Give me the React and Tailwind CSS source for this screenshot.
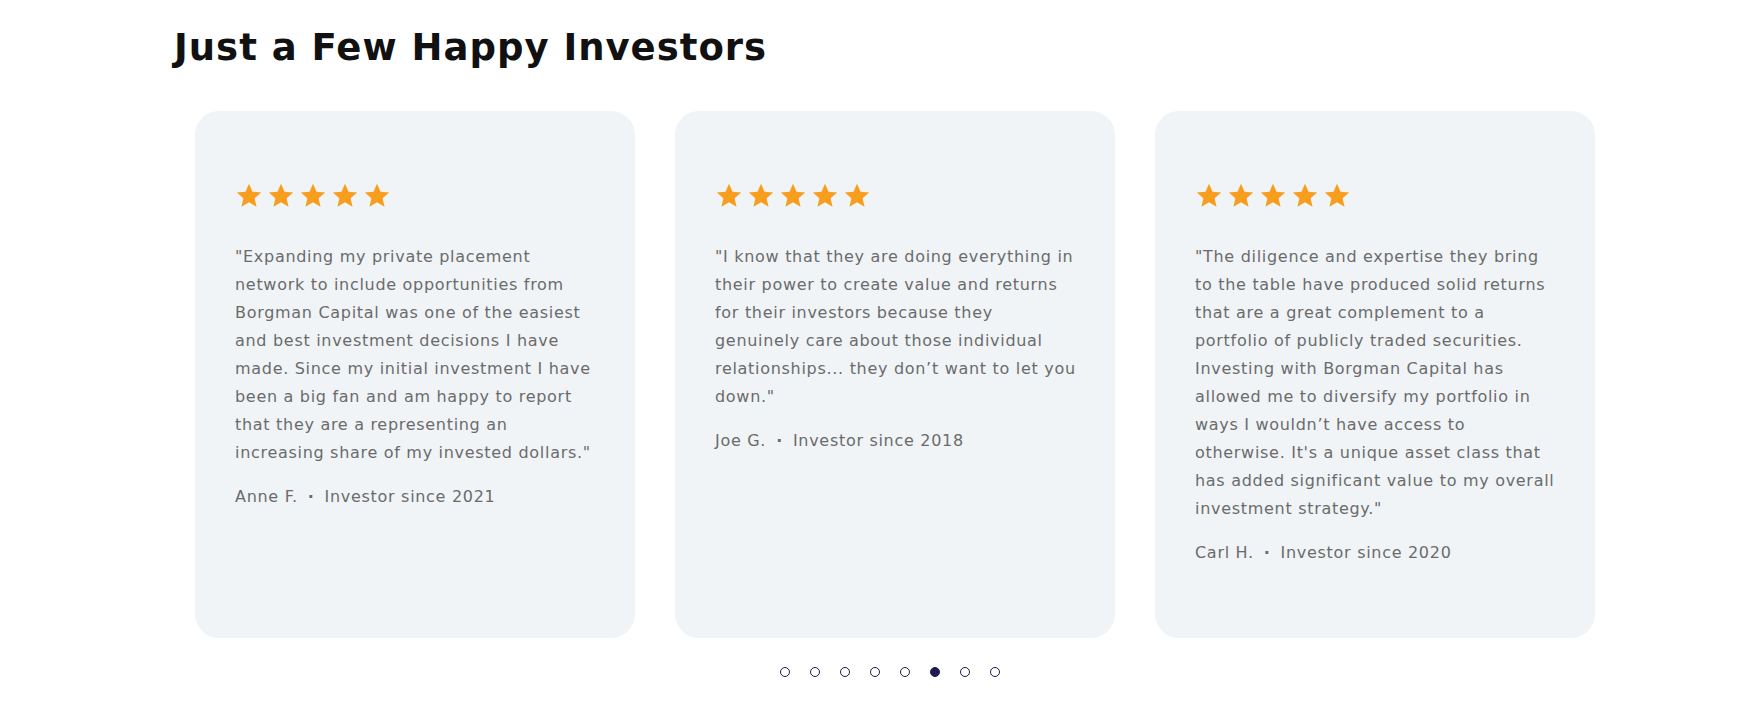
import React from 'react';

const testimonials = [
    {
        lines: [
            '"Expanding my private placement',
            'network to include opportunities from',
            'Borgman Capital was one of the easiest',
            'and best investment decisions I have',
            'made. Since my initial investment I have',
            'been a big fan and am happy to report',
            'that they are a representing an',
            'increasing share of my invested dollars."',
        ],
        name: 'Anne F.',
        since: 'Investor since 2021',
    },
    {
        lines: [
            '"I know that they are doing everything in',
            'their power to create value and returns',
            'for their investors because they',
            'genuinely care about those individual',
            'relationships... they don\u2019t want to let you',
            'down."',
        ],
        name: 'Joe G.',
        since: 'Investor since 2018',
    },
    {
        lines: [
            '"The diligence and expertise they bring',
            'to the table have produced solid returns',
            'that are a great complement to a',
            'portfolio of publicly traded securities.',
            'Investing with Borgman Capital has',
            'allowed me to diversify my portfolio in',
            'ways I wouldn\u2019t have access to',
            'otherwise. It\'s a unique asset class that',
            'has added significant value to my overall',
            'investment strategy."',
        ],
        name: 'Carl H.',
        since: 'Investor since 2020',
    },
];

const Star = () => (
    <svg viewBox="0 0 24 24" className="w-[28px] h-[27px]" fill="#f99d1c">
        <path d="M12 1.5l3.1 7.1 7.7.7-5.8 5.1 1.7 7.6L12 18l-6.7 4 1.7-7.6-5.8-5.1 7.7-.7z" />
    </svg>
);

const Card = ({ t }) => (
    <div className="w-[440px] h-[527px] shrink-0 rounded-[24px] bg-[#f0f4f7] px-[40px] pt-[71px]">
        <div className="flex gap-[4px]">
            {[0, 1, 2, 3, 4].map(i => <Star key={i} />)}
        </div>
        <p className="mt-[34px] text-[16px] leading-[28px] tracking-[0.7px] text-[#6b6b6b]">
            {t.lines.map((l, i) => (
                <span key={i} className="block whitespace-nowrap">{l}</span>
            ))}
        </p>
        <div className="mt-[16px] text-[16px] leading-[28px] tracking-[0.7px] text-[#6b6b6b] flex items-center">
            <span>{t.name}</span>
            <span className="mx-[10px] font-bold">·</span>
            <span>{t.since}</span>
        </div>
    </div>
);

const App = () => {
    return (
        <div className="w-[1740px] h-[724px] bg-white font-['DejaVu_Sans',sans-serif] overflow-hidden">
            <div className="pl-[174px] pt-[24px]">
                <h2 className="text-[37px] leading-[48px] font-bold tracking-[1px] text-[#111]">Just a Few Happy Investors</h2>
            </div>
            {/* Cards */}
            <div className="flex gap-[40px] pl-[195px] mt-[39px]">
                {testimonials.map(t => <Card key={t.name} t={t} />)}
            </div>
            {/* Dots */}
            <div className="flex justify-center gap-[20px] pl-[40px] mt-[29px]">
                {[0, 1, 2, 3, 4, 5, 6, 7].map(i => (
                    <span
                        key={i}
                        className={`w-[10px] h-[10px] rounded-full border-[1.5px] border-[#1e1b4f] ${i === 5 ? 'bg-[#1e1b4f]' : 'bg-transparent'}`}
                    />
                ))}
            </div>
        </div>
    );
};

export default App;
